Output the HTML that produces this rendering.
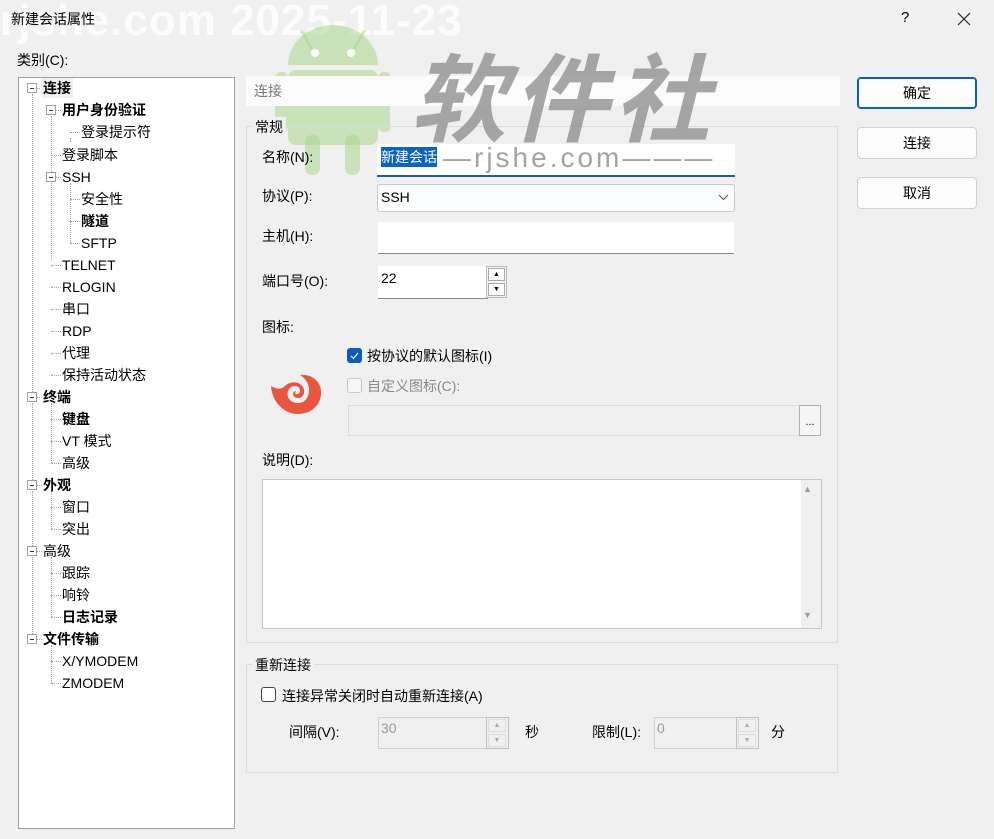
<!DOCTYPE html>
<html><head><meta charset="utf-8"><style>
*{margin:0;padding:0;box-sizing:border-box}
body{width:994px;height:839px;background:#f0f0f0;font-family:"Liberation Sans","Noto Sans CJK SC",sans-serif;font-size:14px;color:#000;position:relative;overflow:hidden}
.a{position:absolute;white-space:nowrap}
.t{position:absolute;white-space:nowrap;line-height:20px}
.b{font-weight:bold}
.box{position:absolute;width:10px;height:10px;border:1px solid #a0a0a0;background:#fff}
.box:after{content:"";position:absolute;left:2px;top:4px;width:4px;height:1px;background:#333}
.vl{position:absolute;border-left:1px dotted #a0a0a0;width:0}
.hl{position:absolute;border-top:1px dotted #a0a0a0;height:0}
.inp{position:absolute;background:#fff;border-bottom:1px solid #8a8a8a}
.btn{position:absolute;width:120px;height:32px;background:#fdfdfd;border:1px solid #d0d0d0;border-radius:4px;text-align:center;line-height:30px;font-size:14px}
.grp{position:absolute;border:1px solid #dcdcdc}
.cb{position:absolute;width:15px;height:15px;border:1px solid #555;border-radius:3px;background:#fff}
.spin{position:absolute;width:21px;border:1px solid #b8b8b8;background:#f0f0f0}
</style></head><body>
<!-- watermarks -->
<div class="a" style="left:0;top:-4px;font-size:44px;font-weight:bold;color:rgba(255,255,255,0.8);letter-spacing:1px">rjshe.com 2025-11-23</div>
<svg class="a" style="left:275px;top:20px" width="115" height="160" viewBox="0 0 115 160">
<g fill="rgba(170,215,140,0.55)">
<path d="M13 45 A45 40 0 0 1 103 45 Z"/>
<rect x="13" y="50" width="90" height="75" rx="8"/>
<rect x="0" y="52" width="13" height="60" rx="6"/>
<rect x="103" y="52" width="13" height="60" rx="6"/>
<rect x="30" y="115" width="15" height="40" rx="7"/>
<rect x="70" y="115" width="15" height="40" rx="7"/>
<path d="M28 10 L38 28 L35 29 L25 11Z M88 10 L78 28 L81 29 L91 11Z"/>
</g>
<circle cx="40" cy="33" r="4" fill="#fff"/><circle cx="76" cy="33" r="4" fill="#fff"/>
</svg>

<div class="a" style="left:11px;top:9px;font-size:14px">新建会话属性</div>
<div class="a" style="left:901px;top:9px;font-size:15px">?</div>
<svg class="a" style="left:957px;top:12px" width="14" height="14"><path d="M1 1L13 13M13 1L1 13" stroke="#222" stroke-width="1.2"/></svg>

<div class="a" style="left:17px;top:50px">类别(C):</div>
<div class="a" style="left:18px;top:77px;width:217px;height:752px;background:#fff;border:1px solid #a0a0a0"></div>
<div class="vl" style="left:32px;top:94px;height:546px"></div>
<div class="vl" style="left:51px;top:116px;height:144px"></div>
<div class="vl" style="left:70px;top:138px;height:4px"></div>
<div class="vl" style="left:70px;top:183px;height:60px"></div>
<div class="vl" style="left:51px;top:403px;height:60px"></div>
<div class="vl" style="left:51px;top:491px;height:38px"></div>
<div class="vl" style="left:51px;top:557px;height:60px"></div>
<div class="vl" style="left:51px;top:645px;height:38px"></div>
<div class="hl" style="left:37px;top:88px;width:5px"></div>
<div class="hl" style="left:56px;top:110px;width:5px"></div>
<div class="hl" style="left:70px;top:132px;width:10px"></div>
<div class="hl" style="left:51px;top:155px;width:10px"></div>
<div class="hl" style="left:56px;top:177px;width:5px"></div>
<div class="hl" style="left:70px;top:199px;width:10px"></div>
<div class="hl" style="left:70px;top:221px;width:10px"></div>
<div class="hl" style="left:70px;top:243px;width:10px"></div>
<div class="hl" style="left:51px;top:265px;width:10px"></div>
<div class="hl" style="left:51px;top:287px;width:10px"></div>
<div class="hl" style="left:51px;top:309px;width:10px"></div>
<div class="hl" style="left:51px;top:331px;width:10px"></div>
<div class="hl" style="left:51px;top:353px;width:10px"></div>
<div class="hl" style="left:51px;top:375px;width:10px"></div>
<div class="hl" style="left:37px;top:397px;width:5px"></div>
<div class="hl" style="left:51px;top:419px;width:10px"></div>
<div class="hl" style="left:51px;top:441px;width:10px"></div>
<div class="hl" style="left:51px;top:463px;width:10px"></div>
<div class="hl" style="left:37px;top:485px;width:5px"></div>
<div class="hl" style="left:51px;top:507px;width:10px"></div>
<div class="hl" style="left:51px;top:529px;width:10px"></div>
<div class="hl" style="left:37px;top:551px;width:5px"></div>
<div class="hl" style="left:51px;top:573px;width:10px"></div>
<div class="hl" style="left:51px;top:595px;width:10px"></div>
<div class="hl" style="left:51px;top:617px;width:10px"></div>
<div class="hl" style="left:37px;top:639px;width:5px"></div>
<div class="hl" style="left:51px;top:661px;width:10px"></div>
<div class="hl" style="left:51px;top:683px;width:10px"></div>
<div class="box" style="left:27px;top:83px"></div>
<div class="box" style="left:46px;top:105px"></div>
<div class="box" style="left:46px;top:172px"></div>
<div class="box" style="left:27px;top:392px"></div>
<div class="box" style="left:27px;top:480px"></div>
<div class="box" style="left:27px;top:546px"></div>
<div class="box" style="left:27px;top:634px"></div>
<div class="t b" style="left:41px;top:78px;background:#f0f0f0;padding:0 2px">连接</div>
<div class="t b" style="left:62px;top:100px">用户身份验证</div>
<div class="t" style="left:81px;top:122px">登录提示符</div>
<div class="t" style="left:62px;top:145px">登录脚本</div>
<div class="t" style="left:62px;top:167px">SSH</div>
<div class="t" style="left:81px;top:189px">安全性</div>
<div class="t b" style="left:81px;top:211px">隧道</div>
<div class="t" style="left:81px;top:233px">SFTP</div>
<div class="t" style="left:62px;top:255px">TELNET</div>
<div class="t" style="left:62px;top:277px">RLOGIN</div>
<div class="t" style="left:62px;top:299px">串口</div>
<div class="t" style="left:62px;top:321px">RDP</div>
<div class="t" style="left:62px;top:343px">代理</div>
<div class="t" style="left:62px;top:365px">保持活动状态</div>
<div class="t b" style="left:43px;top:387px">终端</div>
<div class="t b" style="left:62px;top:409px">键盘</div>
<div class="t" style="left:62px;top:431px">VT 模式</div>
<div class="t" style="left:62px;top:453px">高级</div>
<div class="t b" style="left:43px;top:475px">外观</div>
<div class="t" style="left:62px;top:497px">窗口</div>
<div class="t" style="left:62px;top:519px">突出</div>
<div class="t" style="left:43px;top:541px">高级</div>
<div class="t" style="left:62px;top:563px">跟踪</div>
<div class="t" style="left:62px;top:585px">响铃</div>
<div class="t b" style="left:62px;top:607px">日志记录</div>
<div class="t b" style="left:43px;top:629px">文件传输</div>
<div class="t" style="left:62px;top:651px">X/YMODEM</div>
<div class="t" style="left:62px;top:673px">ZMODEM</div>

<div class="a" style="left:246px;top:76px;width:594px;height:30px;background:#fbfbfb"></div>
<div class="a" style="left:254px;top:81px;color:#777">连接</div>
<div class="grp" style="left:246px;top:126px;width:592px;height:517px"></div>
<div class="a" style="left:252px;top:117px;background:#f0f0f0;padding:0 3px">常规</div>

<div class="a" style="left:262px;top:147px">名称(N):</div>
<div class="inp" style="left:377px;top:144px;width:358px;height:33px;border-bottom:2px solid #1f5f8f"></div>
<div class="a" style="left:381px;top:147px;background:#0a64c8;color:#fff;line-height:20px">新建会话</div>

<div class="a" style="left:262px;top:186px">协议(P):</div>
<div class="a" style="left:377px;top:184px;width:358px;height:28px;background:#fbfcfd;border:1px solid #c8c8c8;border-radius:3px"></div>
<div class="a" style="left:381px;top:189px">SSH</div>
<svg class="a" style="left:718px;top:194px" width="11" height="8"><path d="M1 1L5.5 5.5L10 1" fill="none" stroke="#555"/></svg>

<div class="a" style="left:262px;top:226px">主机(H):</div>
<div class="inp" style="left:378px;top:222px;width:356px;height:32px"></div>

<div class="a" style="left:262px;top:271px">端口号(O):</div>
<div class="inp" style="left:378px;top:266px;width:110px;height:33px"></div>
<div class="a" style="left:381px;top:270px">22</div>
<div class="spin" style="left:486px;top:266px;height:32px;background:#f6f6f6"></div>
<div class="a" style="left:488px;top:268px;width:17px;height:13px;border:1px solid #aaa;background:#fff;font-size:7px;text-align:center;line-height:12px">▲</div>
<div class="a" style="left:488px;top:283px;width:17px;height:13px;border:1px solid #aaa;background:#fff;font-size:7px;text-align:center;line-height:12px">▼</div>

<div class="a" style="left:262px;top:317px">图标:</div>
<div class="cb" style="left:347px;top:348px;background:#0b5cc0;border-color:#0b5cc0"></div>
<svg class="a" style="left:349px;top:351px" width="11" height="10"><path d="M2 5L4.5 7.5L9 2" fill="none" stroke="#fff" stroke-width="1.2"/></svg>
<div class="a" style="left:367px;top:346px">按协议的默认图标(I)</div>
<svg class="a" style="left:268px;top:372px" width="56" height="46" viewBox="0 0 56 46">
<path d="M3 14 C4 30 16 42 30 42 C44 42 54 32 53 19 C52 8 43 2 32 3 C40 8 43 16 40 24 C37 32 27 33 22 28 C17 23 20 14 27 14 C32 14 34 20 30 22 C28 23 26 21 28 19 C24 19 24 25 29 26 C35 27 38 20 35 15 C31 9 22 9 17 14 C13 18 8 17 3 14Z" fill="#e8563f"/>
</svg>
<div class="cb" style="left:347px;top:378px;border-color:#c8c8c8;background:#f6f6f6"></div>
<div class="a" style="left:367px;top:376px;color:#888">自定义图标(C):</div>
<div class="a" style="left:348px;top:405px;width:473px;height:31px;border:1px solid #dcdcdc;background:#f0f0f0"></div>
<div class="a" style="left:799px;top:405px;width:22px;height:31px;border:1px solid #b0b0b0;background:#f5f5f5;font-size:11px;text-align:center;line-height:32px">...</div>

<div class="a" style="left:262px;top:450px">说明(D):</div>
<div class="a" style="left:262px;top:479px;width:560px;height:150px;background:#fff;border:1px solid #c8c8c8"></div>
<div class="a" style="left:801px;top:480px;width:20px;height:148px;background:#f0f0f0"></div>
<div class="a" style="left:803px;top:484px;font-size:9px;color:#999">▲</div>
<div class="a" style="left:803px;top:610px;font-size:9px;color:#999">▼</div>

<div class="grp" style="left:246px;top:664px;width:592px;height:109px"></div>
<div class="a" style="left:252px;top:655px;background:#f0f0f0;padding:0 3px">重新连接</div>
<div class="cb" style="left:261px;top:687px;border-color:#444"></div>
<div class="a" style="left:282px;top:686px">连接异常关闭时自动重新连接(A)</div>

<div class="a" style="left:289px;top:722px">间隔(V):</div>
<div class="a" style="left:378px;top:717px;width:131px;height:32px;border:1px solid #d0d0d0;background:#f0f0f0"></div>
<div class="a" style="left:381px;top:720px;color:#999">30</div>
<div class="a" style="left:486px;top:717px;width:23px;height:32px;border:1px solid #c0c0c0;background:#f0f0f0"></div>
<div class="a" style="left:488px;top:719px;width:18px;height:13px;border:1px solid #ddd;font-size:7px;color:#aaa;text-align:center;line-height:12px">▲</div>
<div class="a" style="left:488px;top:734px;width:18px;height:13px;border:1px solid #ddd;font-size:7px;color:#aaa;text-align:center;line-height:12px">▼</div>
<div class="a" style="left:525px;top:722px">秒</div>

<div class="a" style="left:592px;top:722px">限制(L):</div>
<div class="a" style="left:654px;top:717px;width:105px;height:32px;border:1px solid #d0d0d0;background:#f0f0f0"></div>
<div class="a" style="left:657px;top:720px;color:#999">0</div>
<div class="a" style="left:736px;top:717px;width:23px;height:32px;border:1px solid #c0c0c0;background:#f0f0f0"></div>
<div class="a" style="left:738px;top:719px;width:18px;height:13px;border:1px solid #ddd;font-size:7px;color:#aaa;text-align:center;line-height:12px">▲</div>
<div class="a" style="left:738px;top:734px;width:18px;height:13px;border:1px solid #ddd;font-size:7px;color:#aaa;text-align:center;line-height:12px">▼</div>
<div class="a" style="left:771px;top:722px">分</div>

<div class="btn" style="left:857px;top:77px;border:1px solid #0a5cc0;box-shadow:inset 0 0 0 1px #0a5cc0">确定</div>
<div class="btn" style="left:857px;top:127px">连接</div>
<div class="btn" style="left:857px;top:177px">取消</div>

<div class="a" style="left:410px;top:38px;font-size:96px;font-weight:bold;color:rgba(150,150,150,0.85);font-family:'Noto Sans CJK SC','WenQuanYi Zen Hei',sans-serif;letter-spacing:6px;font-style:italic;line-height:110px">软件社</div>
<div class="a" style="left:443px;top:141px;font-size:28px;color:rgba(140,140,140,0.8);letter-spacing:3px;line-height:34px">—rjshe.com———</div>
</body></html>
